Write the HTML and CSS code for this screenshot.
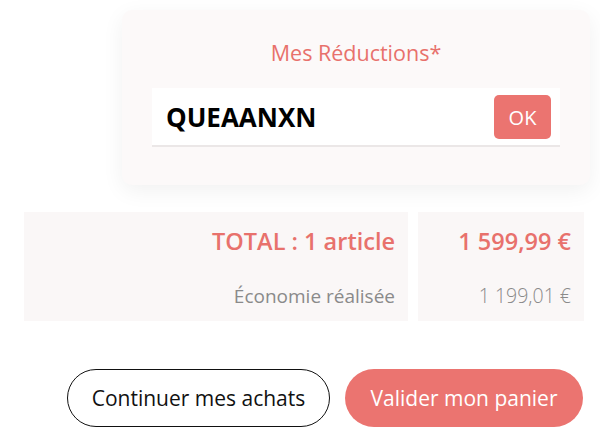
FILE: index.html
```html
<!DOCTYPE html>
<html lang="fr">
<head>
<meta charset="utf-8">
<title>Panier</title>
<link rel="stylesheet" href="styles.css">
</head>
<body>
<main class="cart-summary">
  <section class="promo-card">
    <h2 class="promo-title">Mes Réductions*</h2>
    <div class="promo-field">
      <span class="promo-code">QUEAANXN</span>
      <button class="promo-ok" type="button">OK</button>
    </div>
  </section>

  <section class="totals">
    <div class="totals-labels">
      <div class="total-line">TOTAL : 1 article</div>
      <div class="saving-line">Économie réalisée</div>
    </div>
    <div class="totals-values">
      <div class="total-line">1 599,99 €</div>
      <div class="saving-line">1 199,01 €</div>
    </div>
  </section>

  <div class="actions">
    <button class="btn btn-outline" type="button">Continuer mes achats</button>
    <button class="btn btn-primary" type="button">Valider mon panier</button>
  </div>
</main>
</body>
</html>
```

FILE: styles.css
```css
* {
  box-sizing: border-box;
}

html, body {
  margin: 0;
  padding: 0;
  background: #ffffff;
}

body {
  font-family: "Open Sans", "Liberation Sans", sans-serif;
  color: #111;
  width: 600px;
  height: 438px;
  overflow: hidden;
}

.cart-summary {
  display: flex;
  flex-direction: column;
  padding-top: 10px;
}

/* Discount code card */
.promo-card {
  margin-left: 122px;
  width: 468px;
  height: 175px;
  background: #fcf9f9;
  border-radius: 10px;
  box-shadow: 0 6px 22px rgba(0, 0, 0, 0.06);
  padding: 28px 30px 0;
  display: flex;
  flex-direction: column;
  align-items: center;
}

.promo-title {
  margin: 0;
  font-size: 21.5px;
  font-weight: 400;
  line-height: 30px;
  color: #e8716c;
}

.promo-field {
  margin-top: 20px;
  width: 408px;
  height: 59px;
  background: #ffffff;
  border-bottom: 2px solid #ebe7e7;
  display: flex;
  align-items: center;
  justify-content: space-between;
  padding: 0 9px 0 14px;
}

.promo-code {
  font-size: 26px;
  font-weight: 700;
  color: #000;
}

.promo-ok {
  width: 57px;
  height: 44px;
  margin-top: 1px;
  border: 0;
  border-radius: 5px;
  background: #eb7470;
  color: #fff;
  font-family: inherit;
  font-size: 20px;
  padding: 0;
}

/* Totals */
.totals {
  margin-top: 27px;
  margin-left: 24px;
  display: flex;
  gap: 10px;
  height: 109px;
}

.totals-labels,
.totals-values {
  background: #faf7f7;
  display: flex;
  flex-direction: column;
  align-items: flex-end;
  padding-top: 12px;
}

.totals-labels {
  width: 384px;
  padding-right: 13px;
}

.totals-values {
  width: 166px;
  padding-right: 13px;
}

.total-line {
  font-size: 23.5px;
  font-weight: 600;
  line-height: 34px;
  color: #e8716c;
}

.saving-line {
  margin-top: 25px;
  font-size: 19px;
  font-weight: 400;
  line-height: 26px;
  color: #8a8a8a;
}

.totals-values .saving-line {
  font-size: 19.5px;
  font-weight: 300;
}

/* Buttons */
.actions {
  margin-top: 48px;
  display: flex;
  justify-content: flex-end;
  gap: 15px;
  padding-right: 17px;
}

.btn {
  height: 58px;
  border-radius: 29px;
  font-family: inherit;
  font-size: 21px;
  padding: 0;
}

.btn-outline {
  width: 263px;
  background: #fff;
  border: 1px solid #111;
  color: #111;
}

.btn-primary {
  width: 238px;
  background: #eb7470;
  border: 0;
  color: #fff;
}
```
